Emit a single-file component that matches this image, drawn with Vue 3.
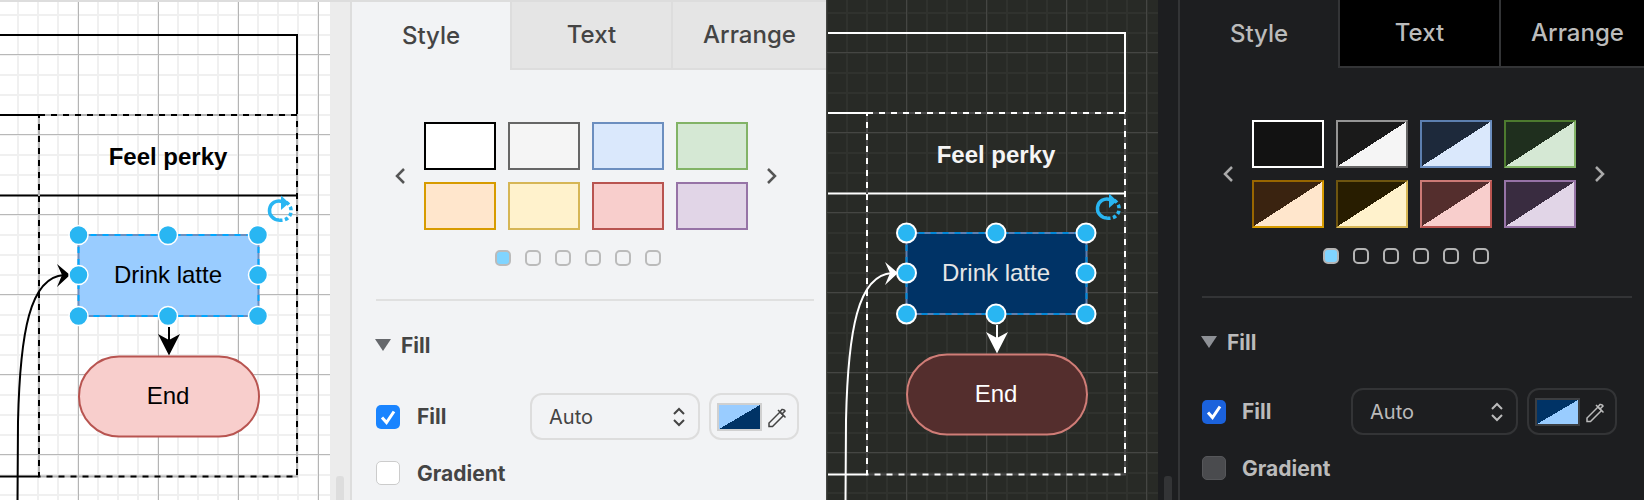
<template>
  <div class="page">
    <section v-for="t in themes" :key="t.name" class="pane" :class="t.name">
      <div class="canvas">
        <svg class="diagram" width="332" height="500">
          <!-- swimlane frame -->
          <path class="line" d="M0 33H297V113M0 113H39M0 193.5H297M0 474.5H39" />
          <path class="dash-back" d="M39 113H297V474.5H39Z" />
          <path class="dash" d="M39 113H297V474.5H39Z" />
          <text class="label bold" x="168" y="163">Feel perky</text>

          <!-- connectors -->
          <path class="line" d="M17.5 500L18 420C20 330 30 275 64 273" />
          <path class="head" d="M70 273L57 262L62 273L57 285Z" />
          <path class="line" d="M169 325V343" />
          <path class="head" d="M169 353.5L158 332L169 338L180 332Z" />

          <!-- shapes -->
          <rect class="drink" x="78.5" y="233" width="180" height="81" />
          <rect class="select-dash" x="78.5" y="233" width="180" height="81" />
          <text class="label ink-drink" x="168" y="281">Drink latte</text>
          <rect class="end" x="79" y="354.5" width="180" height="80" rx="40" />
          <text class="label ink-end" x="168" y="402">End</text>

          <circle v-for="h in handles" :key="h[0] + '-' + h[1]" class="handle" :cx="h[0]" :cy="h[1]" r="9.5" />

          <!-- rotate handle -->
          <path class="rotate" d="M282 199.5A9.5 9.5 0 1 0 279 218" />
          <path class="rotate rotate-dash" d="M279 218A9.5 9.5 0 0 0 284 199.5" />
          <path class="rotate-head" d="M281 193.5L289 201L281 208Z" />
        </svg>
      </div>
      <div class="gutter"><span class="thumb"></span></div>

      <aside class="panel">
        <div class="tabs">
          <div class="tab active">Style</div>
          <div class="tab">Text</div>
          <div class="tab">Arrange</div>
        </div>

        <div class="styles">
          <svg class="chev" width="12" height="18" viewBox="0 0 12 18"><path d="M10 2L3 9L10 16" /></svg>
          <div class="swatches">
            <div v-for="s in t.swatches" :key="s.join()" class="swatch" :style="swatchStyle(s)"></div>
          </div>
          <svg class="chev" width="12" height="18" viewBox="0 0 12 18"><path d="M2 2L9 9L2 16" /></svg>
        </div>

        <div class="dots">
          <span v-for="n in 6" :key="n" class="dot" :class="{ on: n === 1 }"></span>
        </div>

        <div class="divider"></div>

        <div class="section-head">
          <svg width="16" height="12" viewBox="0 0 16 12"><path class="tri" d="M0 0H16L8 12Z" /></svg>
          <span>Fill</span>
        </div>

        <div class="row row-fill">
          <span class="check on">
            <svg width="24" height="24" viewBox="0 0 24 24"><path d="M6 12.5L10.5 17.5L18 6.5" /></svg>
          </span>
          <span class="row-label">Fill</span>
          <div class="select">
            <span>Auto</span>
            <svg width="14" height="20" viewBox="0 0 14 20"><path d="M2 7L7 2L12 7M2 13L7 18L12 13" /></svg>
          </div>
          <div class="color-box">
            <span class="color"></span>
            <svg class="dropper" width="24" height="24" viewBox="0 0 24 24">
              <path d="M3 21.5V18L14 7L17.5 10.500L6.500 21.500Z" />
              <path d="M12 5L19.500 12.500M16 9L19 6A2 2 0 0 0 18 5A2 2 0 0 0 16 4.500L13.500 7.500" />
            </svg>
          </div>
        </div>

        <div class="row row-gradient">
          <span class="check"></span>
          <span class="row-label">Gradient</span>
        </div>
      </aside>
    </section>
  </div>
</template>

<script setup>
const handles = [
  [78.5, 233], [168, 233], [258, 233],
  [78.5, 273], [258, 273],
  [78.5, 314], [168, 314], [258, 314],
]

// border top/left, border bottom/right, fill, second fill for the diagonal
const themes = [
  {
    name: 'light',
    swatches: [
      ['#000000', '#000000', '#ffffff', '#ffffff'],
      ['#666666', '#666666', '#f5f5f5', '#f5f5f5'],
      ['#6c8ebf', '#6c8ebf', '#dae8fc', '#dae8fc'],
      ['#82b366', '#82b366', '#d5e8d4', '#d5e8d4'],
      ['#d79b00', '#d79b00', '#ffe6cc', '#ffe6cc'],
      ['#d6b656', '#d6b656', '#fff2cc', '#fff2cc'],
      ['#b85450', '#b85450', '#f8cecc', '#f8cecc'],
      ['#9673a6', '#9673a6', '#e1d5e7', '#e1d5e7'],
    ],
  },
  {
    name: 'dark',
    swatches: [
      ['#ffffff', '#ffffff', '#121212', '#121212'],
      ['#959595', '#666666', '#1a1a1a', '#f5f5f5'],
      ['#5c7fb0', '#6c8ebf', '#1d293b', '#dae8fc'],
      ['#4d7a2f', '#82b366', '#1f2f1e', '#d5e8d4'],
      ['#996600', '#d79b00', '#3a2310', '#ffe6cc'],
      ['#6e5510', '#d6b656', '#281d00', '#fff2cc'],
      ['#cc7a76', '#b85450', '#542e2d', '#f8cecc'],
      ['#9673a6', '#9673a6', '#392c40', '#e1d5e7'],
    ],
  },
]

const swatchStyle = (s) => ({
  borderColor: `${s[0]} ${s[1]} ${s[1]} ${s[0]}`,
  background: `linear-gradient(to bottom right, ${s[2]} 50%, ${s[3]} 50%)`,
})
</script>

<style scoped>
.page {
  display: flex;
  width: 1644px;
  height: 500px;
  overflow: hidden;
  font-family: Inter, "Liberation Sans", sans-serif;
}

.pane {
  display: flex;
  height: 500px;
}

.light {
  width: 826px;
  padding-top: 2px;
  box-sizing: border-box;
  background: #dddddd;
  --ink: #000000;
  --dash-back: #b4b4b4;
  --text: #444444;
  --panel: #f2f3f5;
  --gutter: #ececec;
  --edge: #dddddd;
  --tab: #e5e5e5;
  --tab-edge: #dddddd;
  --chev: #555555;
  --dot: #bbbbbb;
  --pad: 24px;
  --sel-width: 170px;
  --label-gap: 17px;
}

.dark {
  width: 818px;
  --ink: #ffffff;
  --dash-back: #4a4a4a;
  --text: #bbbbbb;
  --panel: #1d1e20;
  --gutter: #1d1e20;
  --edge: #333436;
  --tab: #000000;
  --tab-edge: #333436;
  --chev: #aaaaaa;
  --dot: #b4b4b4;
  --pad: 22px;
  --sel-width: 167px;
  --label-gap: 16px;
}

/* canvas */
.canvas {
  flex: none;
  overflow: hidden;
  background-repeat: repeat;
}

.light .canvas {
  width: 330px;
  background-color: #ffffff;
  background-image:
    linear-gradient(#b8b8b8 1px, transparent 1px),
    linear-gradient(90deg, #b4b4b4 1px, transparent 1px),
    linear-gradient(#f0f0f0 2px, transparent 2px),
    linear-gradient(90deg, #f0f0f0 2px, transparent 2px);
  background-size: 80px 80px, 80px 80px, 20px 20px, 20px 20px;
  background-position: 0 52px, 78px 0, 0 12px, 17px 0;
}

.dark .canvas {
  width: 332px;
  background-color: #282a26;
  background-image:
    linear-gradient(#454643 1px, transparent 1px),
    linear-gradient(90deg, #454643 1px, transparent 1px),
    linear-gradient(#30322e 2px, transparent 2px),
    linear-gradient(90deg, #30322e 2px, transparent 2px);
  background-size: 80px 80px, 80px 80px, 20px 20px, 20px 20px;
  background-position: 0 52px, 80px 0, 0 12px, 20px 0;
}

.diagram {
  display: block;
}

.dark .diagram {
  margin-left: 2px;
}

.line {
  fill: none;
  stroke: var(--ink);
  stroke-width: 2;
}

.dash-back {
  fill: none;
  stroke: var(--dash-back);
  stroke-width: 2;
}

.dash {
  fill: none;
  stroke: var(--ink);
  stroke-width: 2;
  stroke-dasharray: 6 6;
}

.head {
  fill: var(--ink);
}

.label {
  font-family: "Liberation Sans", Arial, sans-serif;
  font-size: 24px;
  text-anchor: middle;
  fill: var(--ink);
}

.bold {
  font-weight: 700;
}

.light .bold {
  fill: #000000;
}

.dark .bold {
  fill: #f5f5f5;
}

.light .drink {
  fill: #99ccff;
  stroke: #6c8ebf;
  stroke-width: 2;
}

.dark .drink {
  fill: #003366;
  stroke: #5f7fb0;
  stroke-width: 2;
}

.select-dash {
  fill: none;
  stroke-width: 2;
  stroke-dasharray: 6 6;
}

.light .select-dash {
  stroke: #00a8ff;
}

.dark .select-dash {
  stroke: #0088d8;
}

.dark .ink-drink {
  fill: #e6e6e6;
}

.light .end {
  fill: #f8cecc;
  stroke: #b85450;
  stroke-width: 2;
}

.dark .end {
  fill: #542e2d;
  stroke: #d07d77;
  stroke-width: 2;
}

.handle {
  fill: #29b6f2;
  stroke: #ffffff;
}

.light .handle {
  stroke-width: 1.500;
}

.dark .handle {
  stroke-width: 2;
}

.rotate {
  fill: none;
  stroke: #29b6f2;
  stroke-width: 3.500;
}

.rotate-dash {
  stroke-dasharray: 3.500 2.500;
}

.rotate-head {
  fill: #29b6f2;
}

/* gutter */
.gutter {
  flex: none;
  width: 20px;
  display: flex;
  align-items: flex-end;
  justify-content: center;
  background: var(--gutter);
  border-right: 2px solid var(--edge);
}

.thumb {
  width: 8px;
  height: 24px;
  border-radius: 3px 3px 0 0;
  background: var(--edge);
}

/* format panel */
.panel {
  flex: 1;
  min-width: 0;
  overflow: hidden;
  background: var(--panel);
  color: var(--text);
}

.tabs {
  display: grid;
  grid-template-columns: 158px 161px 155px;
  height: 68px;
}

.tab {
  display: flex;
  align-items: center;
  justify-content: center;
  box-sizing: border-box;
  padding-bottom: 2px;
  font-size: 24px;
  font-weight: 500;
  background: var(--tab);
  border-bottom: 2px solid var(--tab-edge);
  border-left: 2px solid var(--tab-edge);
}

.tab.active {
  background: var(--panel);
  border: none;
}

.styles {
  display: flex;
  align-items: center;
  gap: 18px;
  margin-top: 52px;
  padding-left: 42px;
}

.chev {
  flex: none;
}

.chev path {
  fill: none;
  stroke: var(--chev);
  stroke-width: 2.500;
}

.swatches {
  display: grid;
  grid-template-columns: repeat(4, 72px);
  grid-auto-rows: 48px;
  gap: 12px;
}

.swatch {
  box-sizing: border-box;
  border: 2px solid;
}

.dots {
  display: flex;
  gap: 14px;
  margin-top: 20px;
  padding-left: 143px;
}

.dot {
  width: 16px;
  height: 16px;
  box-sizing: border-box;
  border: 2px solid var(--dot);
  border-radius: 5px;
}

.dot.on {
  background: #80d4ff;
}

.divider {
  height: 2px;
  margin: 32px 12px 0 var(--pad);
  background: var(--edge);
}

.light .divider {
  margin-top: 33px;
  background: #e0e0e0;
}

.section-head {
  display: flex;
  align-items: center;
  gap: 10px;
  height: 24px;
  margin-top: 32px;
  padding-left: calc(var(--pad) - 1px);
  font-size: 21px;
  font-weight: 700;
}

.tri {
  fill: #66686c;
}

.dark .tri {
  fill: #8e9196;
}

.row {
  display: flex;
  align-items: center;
  padding: 0 27px 0 var(--pad);
  font-size: 21px;
  font-weight: 700;
}

.row-fill {
  height: 47px;
  margin-top: 34px;
}

.light .row-fill {
  margin-top: 36px;
}

.row-gradient {
  height: 24px;
  margin-top: 21px;
}

.check {
  flex: none;
  width: 24px;
  height: 24px;
  box-sizing: border-box;
  border-radius: 5px;
}

.light .check {
  background: #ffffff;
  border: 1px solid #cccccc;
}

.dark .check {
  background: #4a4b4e;
  border: 1px solid #56575a;
}

.light .check.on {
  background: #1a84ff;
  border: none;
}

.dark .check.on {
  background: #1b62dc;
  border: none;
}

.check svg {
  display: block;
}

.check path {
  fill: none;
  stroke: #ffffff;
  stroke-width: 3;
}

.row-label {
  flex: 1;
  margin-left: var(--label-gap);
}

.select,
.color-box {
  box-sizing: border-box;
  height: 47px;
  display: flex;
  align-items: center;
  border: 2px solid var(--edge);
  border-radius: 12px;
  font-weight: 400;
}

.select {
  width: var(--sel-width);
  justify-content: space-between;
  padding: 0 12px 0 17px;
  font-size: 20px;
}

.select path {
  fill: none;
  stroke: var(--text);
  stroke-width: 2;
}

.color-box {
  width: 90px;
  margin-left: 9px;
  padding-left: 6px;
  gap: 4px;
}

.color {
  flex: none;
  width: 45px;
  height: 28px;
  box-sizing: border-box;
}

.light .color {
  border: 2px solid #d0d0d0;
  background: linear-gradient(to bottom right, #99ccff 50%, #003366 50%);
}

.dark .color {
  border: 2px solid #3c3e41;
  background: linear-gradient(to bottom right, #003366 50%, #99ccff 50%);
}

.dropper {
  flex: none;
}

.dropper path {
  fill: none;
  stroke: var(--text);
  stroke-width: 1.500;
}
</style>
